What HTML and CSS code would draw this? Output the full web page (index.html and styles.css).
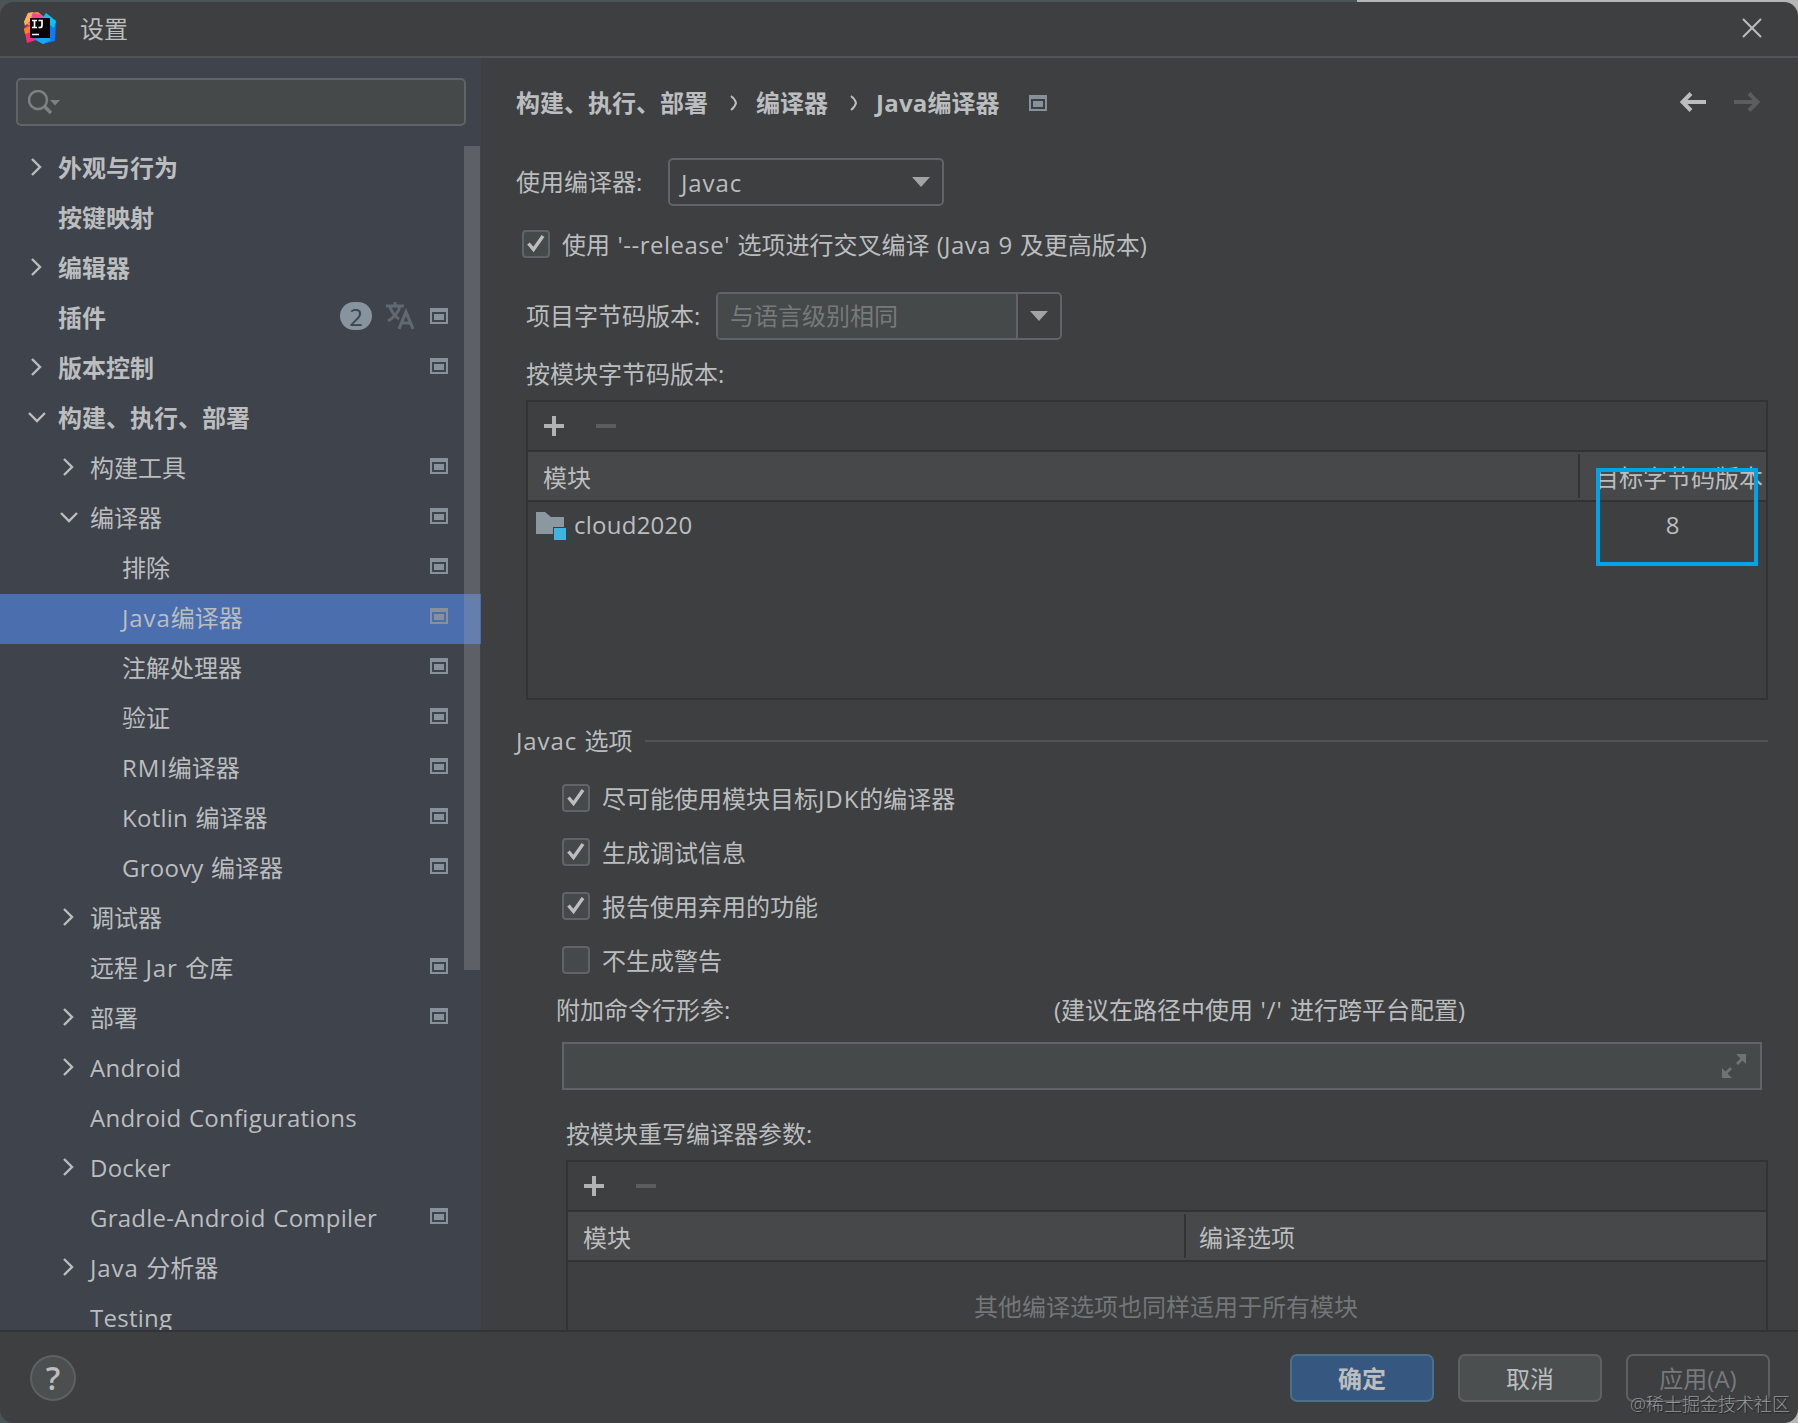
FILE: index.html
```html
<!DOCTYPE html>
<html lang="zh-CN">
<head>
    <meta charset="UTF-8">
    <meta name="viewport" content="width=device-width, initial-scale=1.0">
    <title>设置</title>
    <link rel="stylesheet" href="styles.css">
</head>
<body>
    <!-- shared icons -->
    <svg class="sprite" width="0" height="0">
        <symbol id="right" viewBox="0 0 20 20"><path d="M5 2l8 8-8 8" fill="none" stroke="currentColor" stroke-width="2.4"/></symbol>
        <symbol id="down" viewBox="0 0 20 20"><path d="M2 6l8 8 8-8" fill="none" stroke="currentColor" stroke-width="2.4"/></symbol>
        <symbol id="project" viewBox="0 0 18 16"><path d="M0 0h18v16H0zM2 4v10h14V4z" fill="currentColor" fill-rule="evenodd"/><path d="M4 6h10v6H4z" fill="currentColor"/></symbol>
        <symbol id="check" viewBox="0 0 28 28"><path d="M6.500 13.500l5 6L21 6" fill="none" stroke="currentColor" stroke-width="3.4"/></symbol>
        <symbol id="plus" viewBox="0 0 20 20"><path d="M8 0h4v8h8v4h-8v8H8v-8H0V8h8z" fill="currentColor"/></symbol>
        <symbol id="minus" viewBox="0 0 20 20"><path d="M0 8h20v4H0z" fill="currentColor"/></symbol>
        <symbol id="caret" viewBox="0 0 18 10"><path d="M0 0h18L9 10z" fill="currentColor"/></symbol>
    </svg>

    <div class="window">
        <header class="titlebar">
            <svg class="logo" viewBox="0 0 32 32">
                <path d="M4 1l10-1 6 5-6 12L1 18l3-5-4-3z" fill="#fd8a45"/>
                <path d="M4 13l-4 3 3 15 12-4V12z" fill="#fe2b7a"/>
                <path d="M8 1l10 2 3 6-12 4-5-2z" fill="#f5459c"/>
                <path d="M4 1l5-1-3 9-5 5-1-4z" fill="#fdb25c"/>
                <path d="M0 17l6-3 1 6-6 2z" fill="#fc8424"/>
                <path d="M22 1l10 8-1 20-12 3-9-5 9-18z" fill="#087cfa"/>
                <path d="M22 1l10 8-2 7-12-9z" fill="#07c3f2"/>
                <path d="M10 27l9 5 8-4-3-3z" fill="#18a7f5"/>
                <rect x="6" y="6" width="20" height="20" fill="#0a0408"/>
                <path d="M8 8.500h5M10.500 8.500v7M8 15.500h5M14.500 8.500H18v5q0 2-2 2h-1.500M8 22.500h7" fill="none" stroke="#fff" stroke-width="1.700"/>
            </svg>
            <h1>设置</h1>
            <svg class="close" viewBox="0 0 20 20"><path d="M1 1l18 18M19 1L1 19" stroke="currentColor" stroke-width="2"/></svg>
        </header>

        <div class="content">
            <aside class="sidebar">
                <div class="search">
                    <svg viewBox="0 0 34 26"><circle cx="10" cy="10" r="9" fill="none" stroke="currentColor" stroke-width="2.500"/><path d="M16 16l7 7" stroke="currentColor" stroke-width="3.500"/><path d="M22 10h10l-5 5.500z" fill="currentColor"/></svg>
                </div>
                <ul class="tree">
                    <li class="top"><svg class="arrow"><use href="#right"/></svg><span>外观与行为</span></li>
                    <li class="top"><i class="arrow"></i><span>按键映射</span></li>
                    <li class="top"><svg class="arrow"><use href="#right"/></svg><span>编辑器</span></li>
                    <li class="top"><i class="arrow"></i><span>插件</span>
                        <b class="badge">2</b>
                        <svg class="translate" viewBox="0 0 28 28"><path d="M0 4h18M9 0v4M14 4q-2 9-12 15M4 5q3 8 9 12" fill="none" stroke="currentColor" stroke-width="3"/><path d="M13 27l7-17 7 17M15.500 21h9" fill="none" stroke="currentColor" stroke-width="3.200"/></svg>
                        <svg class="project"><use href="#project"/></svg></li>
                    <li class="top"><svg class="arrow"><use href="#right"/></svg><span>版本控制</span><svg class="project"><use href="#project"/></svg></li>
                    <li class="top"><svg class="arrow"><use href="#down"/></svg><span>构建、执行、部署</span></li>
                    <li class="sub"><svg class="arrow"><use href="#right"/></svg><span>构建工具</span><svg class="project"><use href="#project"/></svg></li>
                    <li class="sub"><svg class="arrow"><use href="#down"/></svg><span>编译器</span><svg class="project"><use href="#project"/></svg></li>
                    <li class="leaf"><span>排除</span><svg class="project"><use href="#project"/></svg></li>
                    <li class="leaf selected"><span><em class="wide">Java</em>编译器</span><svg class="project"><use href="#project"/></svg></li>
                    <li class="leaf"><span>注解处理器</span><svg class="project"><use href="#project"/></svg></li>
                    <li class="leaf"><span>验证</span><svg class="project"><use href="#project"/></svg></li>
                    <li class="leaf"><span><em class="wide">RMI</em>编译器</span><svg class="project"><use href="#project"/></svg></li>
                    <li class="leaf"><span><em>Kotlin</em> 编译器</span><svg class="project"><use href="#project"/></svg></li>
                    <li class="leaf"><span><em>Groovy</em> 编译器</span><svg class="project"><use href="#project"/></svg></li>
                    <li class="sub"><svg class="arrow"><use href="#right"/></svg><span>调试器</span></li>
                    <li class="sub"><i class="arrow"></i><span>远程 <em class="wide">Jar</em> 仓库</span><svg class="project"><use href="#project"/></svg></li>
                    <li class="sub"><svg class="arrow"><use href="#right"/></svg><span>部署</span><svg class="project"><use href="#project"/></svg></li>
                    <li class="sub"><svg class="arrow"><use href="#right"/></svg><span><em>Android</em></span></li>
                    <li class="sub"><i class="arrow"></i><span><em>Android Configurations</em></span></li>
                    <li class="sub"><svg class="arrow"><use href="#right"/></svg><span><em>Docker</em></span></li>
                    <li class="sub"><i class="arrow"></i><span><em>Gradle-Android Compiler</em></span><svg class="project"><use href="#project"/></svg></li>
                    <li class="sub"><svg class="arrow"><use href="#right"/></svg><span><em class="wide">Java</em> 分析器</span></li>
                    <li class="sub"><i class="arrow"></i><span><em>Testing</em></span></li>
                </ul>
                <div class="scrollbar"></div>
            </aside>

            <main class="main">
                <nav class="breadcrumb">
                    <span>构建、执行、部署</span>
                    <svg class="sep" viewBox="0 0 8 16"><path d="M1 1q4 3 5 7-1 4-5 7" fill="none" stroke="currentColor" stroke-width="2"/></svg>
                    <span>编译器</span>
                    <svg class="sep" viewBox="0 0 8 16"><path d="M1 1q4 3 5 7-1 4-5 7" fill="none" stroke="currentColor" stroke-width="2"/></svg>
                    <span><em>Java</em>编译器</span>
                    <svg class="project"><use href="#project"/></svg>
                    <div class="history">
                        <svg viewBox="0 0 26 20"><path d="M26 10H3M11 1.500L2.500 10l8.500 8.500" fill="none" stroke="currentColor" stroke-width="4"/></svg>
                        <svg class="off" viewBox="0 0 26 20"><path d="M0 10h23M15 1.500l8.500 8.500-8.500 8.500" fill="none" stroke="currentColor" stroke-width="4"/></svg>
                    </div>
                </nav>

                <div class="row compiler-row">
                    <label>使用编译器:</label>
                    <div class="select"><em class="wide">Javac</em><svg class="caret"><use href="#caret"/></svg></div>
                </div>

                <div class="row check release">
                    <span class="box"><svg><use href="#check"/></svg></span>
                    <label>使用 <em>'--release'</em> 选项进行交叉编译 (<em class="wide">Java</em> 9 及更高版本)</label>
                </div>

                <div class="row bytecode-row">
                    <label>项目字节码版本:</label>
                    <div class="combo">
                        <span>与语言级别相同</span>
                        <div class="combo-button"><svg class="caret"><use href="#caret"/></svg></div>
                    </div>
                </div>

                <div class="row module-label">按模块字节码版本:</div>

                <div class="table modules">
                    <div class="toolbar"><svg><use href="#plus"/></svg><svg class="off"><use href="#minus"/></svg></div>
                    <div class="thead"><span>模块</span><span class="target">目标字节码版本</span></div>
                    <div class="tbody">
                        <div class="name">
                            <svg class="folder" viewBox="0 0 30 30"><path d="M0 2h9l6 5h13v10H17v7H0z" fill="#8b989f"/><path d="M18 18h12v12H18z" fill="#3eb4e0"/></svg>
                            <em>cloud2020</em>
                        </div>
                        <span class="version">8</span>
                    </div>
                    <div class="highlight"></div>
                </div>

                <div class="group-title"><span><em class="wide">Javac</em> 选项</span></div>

                <div class="options">
                    <div class="check"><span class="box"><svg><use href="#check"/></svg></span><label>尽可能使用模块目标<em class="wide">JDK</em>的编译器</label></div>
                    <div class="check"><span class="box"><svg><use href="#check"/></svg></span><label>生成调试信息</label></div>
                    <div class="check"><span class="box"><svg><use href="#check"/></svg></span><label>报告使用弃用的功能</label></div>
                    <div class="check"><span class="box"></span><label>不生成警告</label></div>
                </div>

                <div class="args-label">
                    <label>附加命令行形参:</label>
                    <span>(建议在路径中使用 <em class="wide">'/'</em> 进行跨平台配置)</span>
                </div>
                <div class="args-input">
                    <svg viewBox="0 0 24 24"><path d="M14 0h10v10l-3.500-3.500-4.500 4.500-2-2 4.500-4.500zM0 14l3.500 3.500L8 13l2 2-4.500 4.500L10 24H0z" fill="currentColor"/></svg>
                </div>

                <div class="override-label">按模块重写编译器参数:</div>

                <div class="table overrides">
                    <div class="toolbar"><svg><use href="#plus"/></svg><svg class="off"><use href="#minus"/></svg></div>
                    <div class="thead"><span>模块</span><span class="target">编译选项</span></div>
                    <div class="empty">其他编译选项也同样适用于所有模块</div>
                </div>
            </main>
        </div>

        <footer class="footer">
            <button class="help">?</button>
            <div class="buttons">
                <button class="primary">确定</button>
                <button>取消</button>
                <button class="disabled">应用(A)</button>
            </div>
            <div class="watermark">@稀土掘金技术社区</div>
        </footer>
    </div>
</body>
</html>
```
FILE: styles.css
```css
:root {
    --bg: #3d3f41;
    --sidebar: #3e434c;
    --text: #bbbdbe;
    --line: #313335;
    --border: #616466;
    --field: #454949;
}

* {
    box-sizing: border-box;
}

body {
    margin: 0;
    height: 100vh;
    overflow: hidden;
    background: linear-gradient(90deg, #4a5454 0, #4a5454 1357px, #b4b6b8 1357px);
    color: var(--text);
    font-family: "Open Sans", "Noto Sans CJK SC", sans-serif;
    font-size: 24px;
    line-height: 32px;
    word-spacing: 1.2px;
    white-space: nowrap;
}

/* latin words inside the labels */
em {
    font-style: normal;
    letter-spacing: 0.25px;
}

em.wide {
    letter-spacing: 0.9px;
}

.sprite {
    position: absolute;
}

svg {
    display: block;
    flex: none;
}

.window {
    height: calc(100vh - 2px);
    margin-top: 2px;
    display: flex;
    flex-direction: column;
    background: var(--bg);
    border-radius: 14px;
    overflow: hidden;
}

.titlebar {
    height: 56px;
    flex: none;
    display: flex;
    align-items: center;
    padding: 0 36px 2px 24px;
    border-bottom: 2px solid #515456;
}

.titlebar h1 {
    margin: 2px 0 0 24px;
    font-size: 24px;
    font-weight: 400;
}

.logo {
    width: 32px;
    height: 32px;
}

.close {
    width: 20px;
    height: 20px;
    margin-left: auto;
}

.content {
    flex: 1;
    min-height: 0;
    display: flex;
}

/* Sidebar */
.sidebar {
    position: relative;
    width: 481px;
    flex: none;
    padding-top: 20px;
    background: var(--sidebar);
    overflow: hidden;
}

.search {
    width: 450px;
    height: 48px;
    margin-left: 16px;
    padding: 10px;
    border: 2px solid var(--border);
    border-radius: 5px;
    background: var(--field);
    color: #7d8182;
}

.search svg {
    width: 34px;
    height: 26px;
}

.tree {
    list-style: none;
    margin: 18px 0 0;
    padding: 0;
}

.tree li {
    height: 50px;
    display: flex;
    align-items: center;
    padding-right: 33px;
}

.tree .top {
    padding-left: 27px;
    font-weight: 700;
}

.tree .sub {
    padding-left: 59px;
}

.tree .leaf {
    padding-left: 122px;
}

.tree .selected {
    background: #4b6eaf;
}

.arrow {
    width: 20px;
    height: 20px;
    margin: -4px 11px 0 0;
}

.tree span {
    margin: -3px auto 0 0;
}

.project {
    width: 18px;
    height: 16px;
    color: #87919b;
}

.tree .project {
    margin-top: -6px;
}

.badge {
    width: 32px;
    height: 28px;
    margin: -6px 14px 0 0;
    border-radius: 14px;
    background: #87939e;
    color: var(--sidebar);
    font-weight: 400;
    line-height: 29px;
    text-align: center;
}

.translate {
    width: 28px;
    height: 28px;
    margin: -6px 16px 0 0;
    color: #626872;
}

.scrollbar {
    position: absolute;
    left: 464px;
    top: 88px;
    width: 16px;
    height: 824px;
    background: rgba(166, 166, 166, 0.3);
}

/* Settings page */
.main {
    flex: 1;
    min-width: 0;
    padding: 29px 30px 0 35px;
    overflow: hidden;
}

.breadcrumb {
    height: 32px;
    display: flex;
    align-items: center;
    font-weight: 700;
}

.breadcrumb .sep {
    width: 8px;
    height: 16px;
    margin: 0 18px 0 22px;
}

.breadcrumb .project {
    margin-left: 29px;
}

.history {
    display: flex;
    gap: 28px;
    margin: -2px 0 0 auto;
    padding-right: 8px;
}

.history svg {
    width: 26px;
    height: 20px;
}

.off {
    color: #5b5d5f;
}

.row {
    display: flex;
    align-items: center;
}

.compiler-row {
    height: 48px;
    margin-top: 39px;
}

.compiler-row label {
    width: 152px;
}

.select {
    width: 276px;
    height: 48px;
    display: flex;
    align-items: center;
    justify-content: space-between;
    padding: 0 12px 0 11px;
    border: 2px solid var(--border);
    border-radius: 5px;
}

.select em {
    padding-top: 2px;
}

.caret {
    width: 18px;
    height: 10px;
    color: #a1a3a5;
}

.check {
    display: flex;
    align-items: center;
    height: 28px;
}

.check label {
    padding-top: 2px;
}

.box {
    width: 28px;
    height: 28px;
    margin-right: 12px;
    border: 2px solid var(--border);
    border-radius: 4px;
    background: var(--field);
}

.box svg {
    width: 28px;
    height: 28px;
    margin: -2px;
}

.release {
    margin: 24px 0 0 6px;
}

.release em {
    letter-spacing: 0.5px;
}

.bytecode-row {
    height: 48px;
    margin: 34px 0 0 10px;
}

.bytecode-row label {
    width: 190px;
}

.combo {
    width: 346px;
    height: 48px;
    display: flex;
    border: 2px solid var(--border);
    border-radius: 5px;
    color: #777a7a;
}

.combo span {
    flex: 1;
    padding-left: 12px;
    line-height: 44px;
    background: var(--field);
}

.combo-button {
    width: 44px;
    padding: 17px 12px;
    border-left: 2px solid var(--border);
}

.module-label {
    margin: 18px 0 0 10px;
}

.table {
    position: relative;
    border: 2px solid var(--line);
}

.modules {
    height: 300px;
    margin: 10px 0 0 10px;
}

.toolbar {
    height: 50px;
    display: flex;
    gap: 32px;
    padding: 14px 16px;
    border-bottom: 2px solid var(--line);
    color: #b0b2b4;
}

.toolbar svg {
    width: 20px;
    height: 20px;
}

.toolbar .off {
    color: #5b5d5f;
}

.thead {
    height: 50px;
    display: flex;
    justify-content: space-between;
    padding-left: 15px;
    border-bottom: 2px solid var(--line);
    background: #464849;
    line-height: 51px;
}

.target {
    position: relative;
    width: 188px;
    padding-left: 17px;
}

.target::before {
    content: "";
    position: absolute;
    left: 0;
    top: 2px;
    width: 2px;
    height: 44px;
    background: var(--line);
}

.tbody {
    display: flex;
    justify-content: space-between;
    line-height: 46px;
}

.name {
    display: flex;
    padding-left: 8px;
}

.folder {
    width: 30px;
    height: 30px;
    margin: 8px 8px 0 0;
}

.version {
    width: 187px;
    text-align: center;
}

/* frame around the target version cell */
.highlight {
    position: absolute;
    right: 8px;
    top: 66px;
    width: 162px;
    height: 98px;
    border: 4px solid #00a2e8;
}

.group-title {
    display: flex;
    align-items: center;
    gap: 12px;
    margin-top: 25px;
}

.group-title::after {
    content: "";
    flex: 1;
    height: 2px;
    background: #515355;
}

.options {
    display: flex;
    flex-direction: column;
    gap: 26px;
    margin: 27px 0 0 46px;
}

.args-label {
    display: flex;
    margin: 20px 0 0 40px;
}

.args-label label {
    width: 498px;
}

.args-input {
    height: 48px;
    display: flex;
    align-items: center;
    justify-content: flex-end;
    margin: 16px 6px 0 46px;
    padding-right: 14px;
    border: 2px solid var(--border);
    background: var(--field);
    color: #6f7374;
}

.args-input svg {
    width: 24px;
    height: 24px;
}

.override-label {
    margin: 28px 0 0 50px;
}

.overrides {
    height: 300px;
    margin: 10px 0 0 50px;
}

.overrides .target {
    width: 582px;
    padding-left: 15px;
}

.empty {
    padding: 29px 2px 0 0;
    text-align: center;
    color: #747677;
}

/* Footer */
.footer {
    position: relative;
    height: 93px;
    flex: none;
    display: flex;
    justify-content: space-between;
    padding: 22px 28px 0 30px;
    border-top: 2px solid var(--line);
}

button {
    width: 144px;
    height: 48px;
    padding: 2px 0 0;
    border: 2px solid #5e6162;
    border-radius: 7px;
    background: #4b4f50;
    color: var(--text);
    font: inherit;
}

.buttons {
    display: flex;
    gap: 24px;
}

.primary {
    border-color: #4b708a;
    background: #365880;
    font-weight: 700;
}

.disabled {
    background: none;
    color: #777a7b;
}

.help {
    width: 46px;
    height: 46px;
    margin-top: 1px;
    padding: 0;
    border-radius: 50%;
    font-size: 32px;
    font-weight: 600;
    line-height: 40px;
}

.watermark {
    position: absolute;
    right: 8px;
    bottom: 5px;
    font-size: 18px;
    font-weight: 300;
    line-height: 28px;
    color: #96989a;
    text-shadow: 1px 1px 1px #222;
}
```
